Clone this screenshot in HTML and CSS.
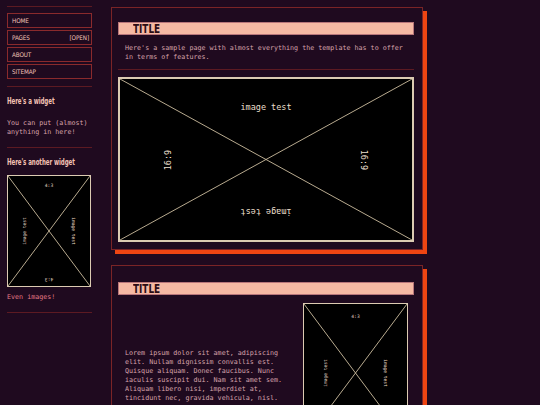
FILE: index.html
```html
<!DOCTYPE html>
<html lang="en">
<head>
<meta charset="utf-8">
<title>Template</title>
<link rel="stylesheet" href="styles.css">
</head>
<body>
<aside class="sidebar">
  <hr class="rule">
  <nav class="nav">
    <a class="nav-item" href="#">HOME</a>
    <a class="nav-item" href="#"><span>PAGES</span><span>[OPEN]</span></a>
    <a class="nav-item" href="#">ABOUT</a>
    <a class="nav-item" href="#">SITEMAP</a>
  </nav>
  <hr class="rule rule-nav">
  <section class="widget">
    <h3 class="widget-title"><span class="narrow">Here's a widget</span></h3>
    <p class="widget-text">You can put (almost) anything in here!</p>
  </section>
  <hr class="rule">
  <section class="widget">
    <h3 class="widget-title"><span class="narrow">Here's another widget</span></h3>
    <div class="frame frame-side">
      <svg width="82" height="110" viewBox="0 0 82 110">
        <line x1="0" y1="0" x2="82" y2="110" class="cross"/>
        <line x1="82" y1="0" x2="0" y2="110" class="cross"/>
        <text x="41" y="11" class="lbl-xs">4:3</text>
        <text x="41" y="99" class="lbl-xs" transform="rotate(180 41 100.5)">4:3</text>
        <text x="16" y="56.5" class="lbl-xs" transform="rotate(-90 16 55)">image test</text>
        <text x="65" y="56.5" class="lbl-xs" transform="rotate(90 65 55)">image test</text>
      </svg>
    </div>
    <p class="caption">Even images!</p>
  </section>
  <hr class="rule">
</aside>

<main class="content">
  <article class="card">
    <h1 class="card-title"><span class="narrow">TITLE</span></h1>
    <p class="card-text">Here's a sample page with almost everything the template has to offer in terms of features.</p>
    <hr class="rule rule-card">
    <div class="frame frame-wide">
      <svg width="292" height="161" viewBox="0 0 292 161">
        <line x1="0" y1="0" x2="292" y2="161" class="cross"/>
        <line x1="292" y1="0" x2="0" y2="161" class="cross"/>
        <text x="146" y="31" class="lbl">image test</text>
        <text x="146" y="136" class="lbl" transform="rotate(180 146 133)">image test</text>
        <text x="48" y="84" class="lbl" transform="rotate(-90 48 81)">16:9</text>
        <text x="244" y="84" class="lbl" transform="rotate(90 244 81)">16:9</text>
      </svg>
    </div>
  </article>

  <article class="card card-second">
    <h1 class="card-title"><span class="narrow">TITLE</span></h1>
    <div class="split">
      <p class="card-text split-text">Lorem ipsum dolor sit amet, adipiscing elit. Nullam dignissim convallis est. Quisque aliquam. Donec faucibus. Nunc iaculis suscipit dui. Nam sit amet sem. Aliquam libero nisi, imperdiet at, tincidunt nec, gravida vehicula, nisl.</p>
      <div class="frame frame-tall">
        <svg width="103" height="138" viewBox="0 0 103 138">
          <line x1="0" y1="0" x2="103" y2="138" class="cross"/>
          <line x1="103" y1="0" x2="0" y2="138" class="cross"/>
          <text x="51.5" y="14" class="lbl-xs">4:3</text>
          <text x="51.5" y="127" class="lbl-xs" transform="rotate(180 51.5 125.5)">4:3</text>
          <text x="21" y="70.5" class="lbl-xs" transform="rotate(-90 21 69)">image test</text>
          <text x="81" y="70.5" class="lbl-xs" transform="rotate(90 81 69)">image test</text>
        </svg>
      </div>
    </div>
  </article>
</main>
</body>
</html>
```

FILE: styles.css
```css
* { box-sizing: border-box; }

html, body {
  margin: 0;
  padding: 0;
  background: #1f0a1f;
  overflow: hidden;
}

body {
  display: flex;
  align-items: flex-start;
  gap: 19px;
  padding: 6px 0 0 7px;
  width: 540px;
  height: 405px;
  font-family: "DejaVu Sans Mono", "Liberation Mono", monospace;
  color: #d6a2aa;
}

.rule {
  margin: 0;
  border: 0;
  border-top: 1px solid #5c1a22;
  height: 0;
}

.sidebar {
  width: 85px;
  flex: none;
}

.nav {
  display: flex;
  flex-direction: column;
  gap: 2px;
  margin-top: 6px;
}

.nav-item {
  display: flex;
  justify-content: space-between;
  align-items: center;
  height: 15px;
  padding: 0 2px 0 4px;
  border: 1px solid #8a2a2c;
  color: #f2c4b8;
  text-decoration: none;
  font-family: "DejaVu Sans Condensed", sans-serif;
  font-size: 6.3px;
  letter-spacing: -0.1px;
}

.rule-nav { margin-top: 7px; }

.widget { padding: 10px 0 0 0; }

.narrow {
  display: inline-block;
  white-space: nowrap;
  transform: scaleX(0.72);
  transform-origin: left center;
}

.widget-title {
  margin: 0;
  font-family: "DejaVu Sans Condensed", sans-serif;
  font-weight: bold;
  font-size: 8.5px;
  line-height: 9px;
  color: #f4c2b4;
  letter-spacing: -0.1px;
}

.widget-text {
  margin: 13px 0 9.5px;
  font-size: 6.7px;
  line-height: 9px;
  color: #d6a2aa;
}

.frame {
  border: 1px solid #dccbb2;
  background: #000;
  line-height: 0;
}

.frame svg { display: block; }

.frame-side {
  width: 84px;
  height: 112px;
  margin-top: 8px;
}

.caption {
  margin: 6.5px 0 9.5px;
  font-size: 6.7px;
  line-height: 9px;
  color: #e07886;
}

.cross {
  stroke: #cdbd9f;
  stroke-width: 0.9;
}

.lbl {
  font-family: "DejaVu Sans Mono", monospace;
  font-size: 8.5px;
  fill: #eadfcc;
  text-anchor: middle;
}

.lbl-xs {
  font-family: "DejaVu Sans Mono", monospace;
  font-size: 4.6px;
  fill: #eadfcc;
  text-anchor: middle;
}

.content {
  width: 312px;
  flex: none;
  display: flex;
  flex-direction: column;
  gap: 15px;
  margin-top: 1px;
}

.card {
  border: 1px solid #7a2426;
  box-shadow: 4px 4px 0 #ee4512;
  padding: 14px 8px 7px 6px;
}

.card-second { padding-top: 16px; }

.card-title {
  display: flex;
  align-items: center;
  margin: 0;
  height: 13px;
  background: #f5b9a3;
  border: 1px solid #b8767a;
  padding-left: 14px;
  font-family: "DejaVu Sans Condensed", sans-serif;
  font-weight: bold;
  font-size: 13px;
  line-height: 11px;
  color: #2a0c14;
}

.card-title .narrow { transform: scaleX(0.76); }

.card-text {
  margin: 8.5px 0 7.5px;
  padding: 0 6px 0 7px;
  font-size: 6.7px;
  line-height: 9px;
  color: #d6a2aa;
}

.rule-card { margin-bottom: 7px; }

.frame-wide {
  width: 296px;
  height: 165px;
  border-width: 2px;
}

.split {
  display: flex;
  align-items: center;
  justify-content: space-between;
  margin-top: 8px;
}

.split-text {
  margin: 0;
  padding-top: 6px;
  width: 172px;
}

.frame-tall {
  width: 105px;
  height: 140px;
  margin-right: 6px;
  flex: none;
}
```
